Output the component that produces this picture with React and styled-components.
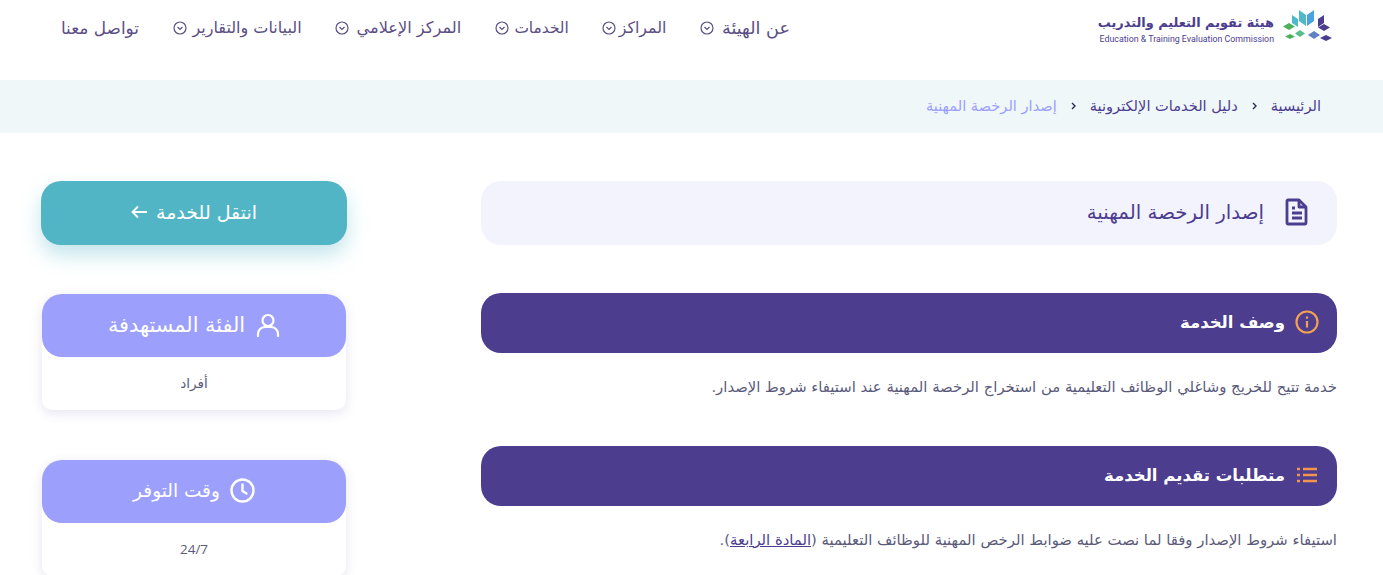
import React from "react";
import styled, { createGlobalStyle } from "styled-components";

const Global = createGlobalStyle`
  html, body { margin: 0; padding: 0; background: #fff; }
  body { font-family: "DejaVu Sans", "Noto Sans", sans-serif; direction: rtl; overflow: hidden; height: 575px; }
`;
const Header = styled.header`
  height: 80px; display: flex; align-items: flex-start; justify-content: space-between;
  padding: 9px 49px 0 60px; box-sizing: border-box;
`;
const Logo = styled.div`display: flex; align-items: flex-start; gap: 8px;`;
const LogoText = styled.div`display: flex; flex-direction: column; align-items: flex-start; gap: 3px; margin-top: 5px; color: #4c3d8f;`;
const LogoAr = styled.span`font-size: 12.9px; font-weight: 700; line-height: 17px;`;
const LogoEn = styled.span`font-family: "Roboto", sans-serif; font-size: 8.8px; line-height: 10px; direction: ltr;`;
const Nav = styled.nav`display: flex; gap: 33.6px; margin-top: 7px;`;
const NavItem = styled.a`
  display: flex; align-items: center; justify-content: space-between; width: ${p => p.$w}px;
  color: #5a4e85; font-size: ${p => p.$size}px; line-height: 24px; white-space: nowrap;
`;
const Crumbs = styled.div`
  height: 53px; background: #eff7f9; display: flex; align-items: center; gap: 14px;
  padding: 0 62px 2px; box-sizing: border-box; font-size: 14.6px; color: #4c3d8f;
`;
const CrumbCurrent = styled.span`color: #9c9ffc;`;
const Page = styled.main`
  display: grid; grid-template-columns: 856px 306px; justify-content: space-between;
  padding: 48px 46px 0 41px;
`;
const Main = styled.div`display: flex; flex-direction: column;`;
const TitleBar = styled.div`
  height: 64px; border-radius: 20px; background: #f3f3fe; display: flex; align-items: center; gap: 21px;
  padding: 0 28px 2px; box-sizing: border-box; margin-bottom: 48px; color: #4c3d8f; font-size: 19.8px;
`;
const SectionBar = styled.div`
  height: 60px; border-radius: 20px; background: #4c3d8f; display: flex; align-items: center; gap: 10px;
  padding: 0 18px 2px 0; box-sizing: border-box; color: #fff; font-size: 16.5px; font-weight: 700;
`;
const Body = styled.p`
  margin: 24px 0 49px; height: 20px; font-size: 14.85px; line-height: 20px; color: #5a5a7a;
`;
const DocLink = styled.a`color: #4c3d8f; text-decoration: underline;`;
const Side = styled.aside`display: flex; flex-direction: column;`;
const GoButton = styled.a`
  height: 64px; border-radius: 20px; background: #52b5c5; color: #fff; display: flex; align-items: center;
  justify-content: center; gap: 8px; font-size: 19px; margin-bottom: 49px; padding-bottom: 2px; box-sizing: border-box;
  box-shadow: 0 10px 20px rgba(82, 181, 197, .35);
`;
const Card = styled.section`
  margin: 0 1px 50px; border-radius: 20px 20px 10px 10px; background: #fff; box-shadow: 0 3px 12px rgba(76, 61, 143, .14);
`;
const CardHead = styled.div`
  height: 63px; border-radius: 20px; background: #9c9ffc; color: #fff; display: flex; align-items: center;
  justify-content: center; gap: ${p => p.$gap}px; font-size: ${p => p.$size}px; padding-bottom: 2px; box-sizing: border-box;
`;
const CardBody = styled.div`
  height: 53px; display: flex; align-items: center; justify-content: center; font-size: 13.5px; color: #5a5a7a;
  font-family: "Open Sans", "DejaVu Sans", sans-serif; padding-bottom: 2px; box-sizing: border-box;
`;

const Chev = () => (
  <svg width="14" height="14" viewBox="0 0 14 14" fill="none" stroke="currentColor" strokeWidth="1.2">
    <circle cx="7" cy="7" r="6" /><path d="M4.5 6l2.5 2.5L9.5 6" />
  </svg>
);
const CrumbSep = () => (
  <svg width="5" height="8" viewBox="0 0 5 8" fill="none" stroke="#2f2a55" strokeWidth="1.4">
    <path d="M1 1l3 3-3 3" />
  </svg>
);
const LogoMark = () => (
  <svg width="52" height="34" viewBox="0 0 52 34">
    <path d="M17 1l7 5v11l-7-5z" fill="#4fb9c9" /><path d="M25 6l7-5v11l-7 5z" fill="#47a4dc" />
    <path d="M10 6l6 4v8l-6-4z" fill="#4fb9c9" /><path d="M36 10l6-4v8l-6 4z" fill="#4c3d8f" />
    <path d="M7 14l6 3.5-6 3.5-6-3.5z" fill="#4cb25e" /><path d="M42 15l6 3.5-6 3.5-6-3.5z" fill="#4c3d8f" />
    <path d="M18 21l5 3.5-5 3.5-5-3.5z" fill="#58bd90" /><path d="M32 22l6 4-6 4-6-4z" fill="#6380c4" />
    <path d="M8 25l5 2.5-5 2.5-5-2.5z" fill="#4cb25e" /><path d="M44 26l6 3-6 3-6-3z" fill="#4c3d8f" />
  </svg>
);
const FileIcon = () => (
  <svg width="24" height="28" viewBox="0 0 24 28" fill="none" stroke="#4c3d8f" strokeWidth="2.8" strokeLinejoin="round">
    <path d="M3 2h11l7 7v16a1 1 0 0 1-1 1H3a1 1 0 0 1-1-1V3a1 1 0 0 1 1-1z" /><path d="M14 2v7h7M7 15h10M7 20h10M7 10h3" />
  </svg>
);
const InfoIcon = () => (
  <svg width="24" height="24" viewBox="0 0 24 24" fill="none" stroke="#f4a04e" strokeWidth="2.2">
    <circle cx="12" cy="12" r="10.5" /><path d="M12 11v6.5M12 6.5v2.2" />
  </svg>
);
const ListIcon = () => (
  <svg width="24" height="16" viewBox="0 0 24 16" fill="none" stroke="#f4954e" strokeWidth="2.6">
    <path d="M8 2h14M8 8h14M8 14h14M2 2h3M2 8h3M2 14h3" />
  </svg>
);
const UserIcon = () => (
  <svg width="24" height="24" viewBox="0 0 24 24" fill="none" stroke="#fff" strokeWidth="2.2" strokeLinecap="round">
    <circle cx="12" cy="7.5" r="5.5" /><path d="M2 23v-2a7 7 0 0 1 7-7h6a7 7 0 0 1 7 7v2" />
  </svg>
);
const ClockIcon = () => (
  <svg width="25" height="25" viewBox="0 0 25 25" fill="none" stroke="#fff" strokeWidth="2.4" strokeLinecap="round">
    <circle cx="12.5" cy="12.5" r="11" /><path d="M12.5 6.5v6.5l4 2.5" />
  </svg>
);
const Arrow = () => (
  <svg width="17" height="14" viewBox="0 0 17 14" fill="none" stroke="#fff" strokeWidth="1.8">
    <path d="M16 7H2M7 1.5L1.5 7 7 12.5" />
  </svg>
);
const navItems = [
  ["عن الهيئة", 90, 1, 17.6], ["المراكز", 64, 1, 15.8], ["الخدمات", 74, 1, 15.4],
  ["المركز الإعلامي", 126, 1, 16.2], ["البيانات والتقارير", 129, 1, 16], ["تواصل معنا", 79, 0, 16.9],
];

export default function App() {
  return (
    <>
      <Global />
      <Header>
        <Logo>
          <LogoMark />
          <LogoText>
            <LogoAr>هيئة تقويم التعليم والتدريب</LogoAr>
            <LogoEn>Education &amp; Training Evaluation Commission</LogoEn>
          </LogoText>
        </Logo>
        <Nav>
          {navItems.map(([t, w, c, s]) => (
            <NavItem key={t} $w={w} $size={s}>{t}{c ? <Chev /> : null}</NavItem>
          ))}
        </Nav>
      </Header>
      <Crumbs>
        <span>الرئيسية</span><CrumbSep /><span>دليل الخدمات الإلكترونية</span><CrumbSep />
        <CrumbCurrent>إصدار الرخصة المهنية</CrumbCurrent>
      </Crumbs>
      <Page>
        <Main>
          <TitleBar><FileIcon />إصدار الرخصة المهنية</TitleBar>
          <SectionBar><InfoIcon />وصف الخدمة</SectionBar>
          <Body>خدمة تتيح للخريج وشاغلي الوظائف التعليمية من استخراج الرخصة المهنية عند استيفاء شروط الإصدار.</Body>
          <SectionBar><ListIcon />متطلبات تقديم الخدمة</SectionBar>
          <Body>استيفاء شروط الإصدار وفقا لما نصت عليه ضوابط الرخص المهنية للوظائف التعليمية (<DocLink>المادة الرابعة</DocLink>).</Body>
        </Main>
        <Side>
          <GoButton>انتقل للخدمة<Arrow /></GoButton>
          <Card><CardHead $size={20.8} $gap={11}><UserIcon />الفئة المستهدفة</CardHead><CardBody>أفراد</CardBody></Card>
          <Card><CardHead $size={18.5} $gap={10}><ClockIcon />وقت التوفر</CardHead><CardBody>24/7</CardBody></Card>
        </Side>
      </Page>
    </>
  );
}
